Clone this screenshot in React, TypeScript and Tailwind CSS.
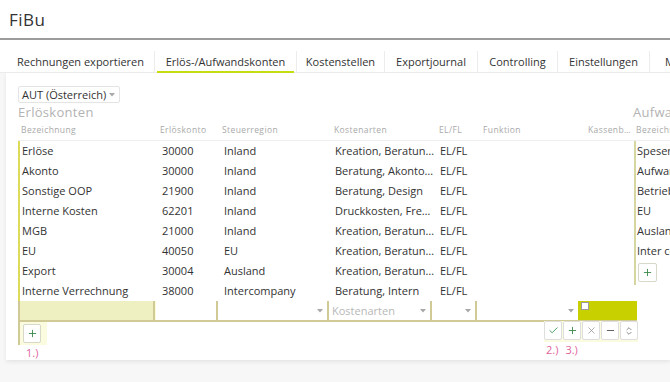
import { Check, Plus, X, Minus, ChevronsUpDown } from 'lucide-react';

const rows: string[][] = [
  ['Erlöse', '30000', 'Inland', 'Kreation, Beratun…', 'EL/FL'],
  ['Akonto', '30000', 'Inland', 'Beratung, Akonto…', 'EL/FL'],
  ['Sonstige OOP', '21900', 'Inland', 'Beratung, Design', 'EL/FL'],
  ['Interne Kosten', '62201', 'Inland', 'Druckkosten, Fre…', 'EL/FL'],
  ['MGB', '21000', 'Inland', 'Kreation, Beratun…', 'EL/FL'],
  ['EU', '40050', 'EU', 'Kreation, Beratun…', 'EL/FL'],
  ['Export', '30004', 'Ausland', 'Kreation, Beratun…', 'EL/FL'],
  ['Interne Verrechnung', '38000', 'Intercompany', 'Beratung, Intern', 'EL/FL'],
];

const rightRows = ['Spesen', 'Aufwand', 'Betriebsausgaben', 'EU', 'Ausland', 'Inter company'];

const tabs = [
  { label: 'Rechnungen exportieren', w: 'w-[148px]', active: false },
  { label: 'Erlös-/Aufwandskonten', w: 'w-[142px]', active: true },
  { label: 'Kostenstellen', w: 'w-[88px]', active: false },
  { label: 'Exportjournal', w: 'w-[93px]', active: false },
  { label: 'Controlling', w: 'w-[80px]', active: false },
  { label: 'Einstellungen', w: 'w-[92px]', active: false },
  { label: 'Mandanten', w: 'w-[90px]', active: false },
];

function Caret() {
  return (
    <svg width="6" height="4" viewBox="0 0 6 4" className="shrink-0">
      <path d="M0 0 L6 0 L3 3.5 Z" fill="#a8a8a8" />
    </svg>
  );
}

const GRID = 'grid grid-cols-[140px_62px_111px_104px_44px_103px_50px]';
const BTN = 'w-[18px] h-[19px] border border-[#dedede] rounded-[2px] bg-white flex items-center justify-center';

export default function App() {
  return (
    <div className="w-[670px] h-[382px] overflow-hidden bg-[#f7f7f7] font-['Open_Sans',sans-serif] text-[#333]">
      <div className="bg-white">
        <div className="h-[40px] border-b-2 border-[#9c9c9c] flex items-center pl-[9px] pt-[1px] text-[17px] text-[#333] tracking-[0.5px]">
          FiBu
        </div>
        <div className="h-[11px]" />
        <div className="flex pl-[7px] h-[22px] border-b border-[#ececec]">
          {tabs.map((t) => (
            <div
              key={t.label}
              className={`${t.w} shrink-0 flex items-center justify-center pt-[1px] text-[11px] text-[#333] border-r border-[#ececec] whitespace-nowrap relative`}
            >
              {t.label}
              {t.active && <div className="absolute left-[2px] right-[2px] bottom-[-1px] h-[2px] bg-[#c6dc12]" />}
            </div>
          ))}
        </div>
      </div>

      <div className="ml-[6px] h-[287px] bg-white shadow-[0_2px_4px_rgba(0,0,0,0.08)] flex items-start pl-[12px] pt-[13px] overflow-hidden">
        {/* Left panel */}
        <div className="w-[614px] shrink-0 flex flex-col">
          <div className="shrink-0 w-[102px] h-[17px] border border-[#e4e4e4] rounded-[2px] flex items-center justify-between pl-[3px] pr-[4px] text-[11px] leading-[14px] text-[#333]">
            <span className="whitespace-nowrap">AUT (Österreich)</span>
            <Caret />
          </div>
          <div className="shrink-0 mt-[1px] h-[16px] flex items-center text-[13px] leading-[16px] text-[#b3b3b3] tracking-[0.3px]">Erlöskonten</div>
          <div className={`${GRID} shrink-0 h-[21px] items-center border-b border-[#eeeeee] text-[8.5px] leading-[12px] text-[#a9a9a9] tracking-[0.4px]`}>
            <div className="pl-[3px]">Bezeichnung</div>
            <div className="pl-[2px]">Erlöskonto</div>
            <div className="pl-[2px]">Steuerregion</div>
            <div className="pl-[3px]">Kostenarten</div>
            <div className="pl-[4px]">EL/FL</div>
            <div className="pl-[4px]">Funktion</div>
            <div className="pl-[6px] whitespace-nowrap">Kassenb…</div>
          </div>
          <div className="shrink-0 border-l-2 border-[#dcdc5a] flex flex-col">
            {rows.map((r) => (
              <div key={r[0]} className={`${GRID} shrink-0 h-[20px] items-center text-[11px] leading-[14px] text-[#333] -ml-[2px]`}>
                <div className="pl-[4px] whitespace-nowrap">{r[0]}</div>
                <div className="pl-[4px]">{r[1]}</div>
                <div className="pl-[4px]">{r[2]}</div>
                <div className="pl-[4px] whitespace-nowrap">{r[3]}</div>
                <div className="pl-[5px]">{r[4]}</div>
                <div />
                <div />
              </div>
            ))}
          </div>
          {/* Edit row */}
          <div className="shrink-0 w-[619px] h-[21px] bg-[#fbfbd6] border-l-2 border-b-2 border-[#d0cb96] flex items-stretch">
            <div className="w-[135px] bg-[#eef0c2] border-r-2 border-[#d0cb96]" />
            <div className="w-[62px] bg-white border-r-2 border-[#d0cb96] ml-[1px]" />
            <div className="w-[111px] bg-white border-r-2 border-[#d0cb96] flex items-center justify-end pr-[4px]">
              <Caret />
            </div>
            <div className="w-[103px] bg-white border-r-2 border-[#d0cb96] flex items-center justify-between pl-[3px] pr-[4px] text-[11px] leading-[14px] text-[#b8b8b8]">
              <span>Kostenarten</span>
              <Caret />
            </div>
            <div className="w-[45px] bg-white border-r-2 border-[#d0cb96] flex items-center justify-end pr-[4px]">
              <Caret />
            </div>
            <div className="w-[101px] bg-white flex items-center justify-end pr-[4px]">
              <Caret />
            </div>
            <div className="flex-1 bg-[#c9d000] relative">
              <div className="absolute left-[3px] top-[1px] w-[8px] h-[8px] bg-white border border-[#9a9a9a]" />
            </div>
          </div>
          {/* Buttons */}
          <div className="shrink-0 w-[619px] flex justify-between items-start">
            <div className="flex flex-col items-start">
              <div className="bg-[#fbfbe0] w-[29px] h-[23px] pl-[3px] pt-[2px] border-l-2 border-[#d0cb96]">
                <div className="w-[18px] h-[19px] border border-[#d8d8c8] rounded-[2px] bg-white flex items-center justify-center">
                  <Plus size={11} strokeWidth={2} color="#3c8a4e" />
                </div>
              </div>
              <div className="text-[11px] leading-[14px] text-[#e0659c] pl-[8px] mt-[1px]">1.)</div>
            </div>
            <div className="flex flex-col items-start mr-[-1px]">
              <div className="flex bg-[#fbfbe0] -mt-[1px] pb-[2px]">
                <div className={BTN}>
                  <Check size={11} strokeWidth={2} color="#3f9a5a" />
                </div>
                <div className={`${BTN} ml-px`}>
                  <Plus size={11} strokeWidth={2} color="#3c8a4e" />
                </div>
                <div className={`${BTN} ml-px`}>
                  <X size={11} strokeWidth={1.5} color="#8a8a8a" />
                </div>
                <div className={`${BTN} ml-px`}>
                  <Minus size={11} strokeWidth={2} color="#555" />
                </div>
                <div className={`${BTN} ml-px`}>
                  <ChevronsUpDown size={10} strokeWidth={2} color="#777" />
                </div>
              </div>
              <div className="flex text-[11px] leading-[14px] text-[#e0659c] mt-[1px] pl-[2px]">
                <span>2.)</span>
                <span className="ml-[7px]">3.)</span>
              </div>
            </div>
          </div>
        </div>

        {/* Right panel */}
        <div className="w-[200px] shrink-0 flex flex-col">
          <div className="shrink-0 h-[17px]" />
          <div className="shrink-0 mt-[1px] h-[16px] flex items-center text-[13px] leading-[16px] text-[#b3b3b3] tracking-[0.3px] pl-[1px] whitespace-nowrap">Aufwandskonten</div>
          <div className="shrink-0 h-[21px] flex items-center border-b border-[#eeeeee] text-[8.5px] leading-[12px] text-[#a9a9a9] tracking-[0.4px] pl-[4px]">Bezeichnung</div>
          <div className="shrink-0 ml-[2px] border-l-2 border-[#d6d6a0] flex flex-col">
            {rightRows.map((r) => (
              <div key={r} className="shrink-0 h-[20px] flex items-center text-[11px] leading-[14px] text-[#333] pl-[1px] whitespace-nowrap">{r}</div>
            ))}
            <div className="pl-[2px] pt-[2px] pb-[3px]">
              <div className="w-[19px] h-[19px] border border-[#d8d8c8] rounded-[2px] bg-white flex items-center justify-center">
                <Plus size={11} strokeWidth={2} color="#3c8a4e" />
              </div>
            </div>
          </div>
        </div>
      </div>
    </div>
  );
}
